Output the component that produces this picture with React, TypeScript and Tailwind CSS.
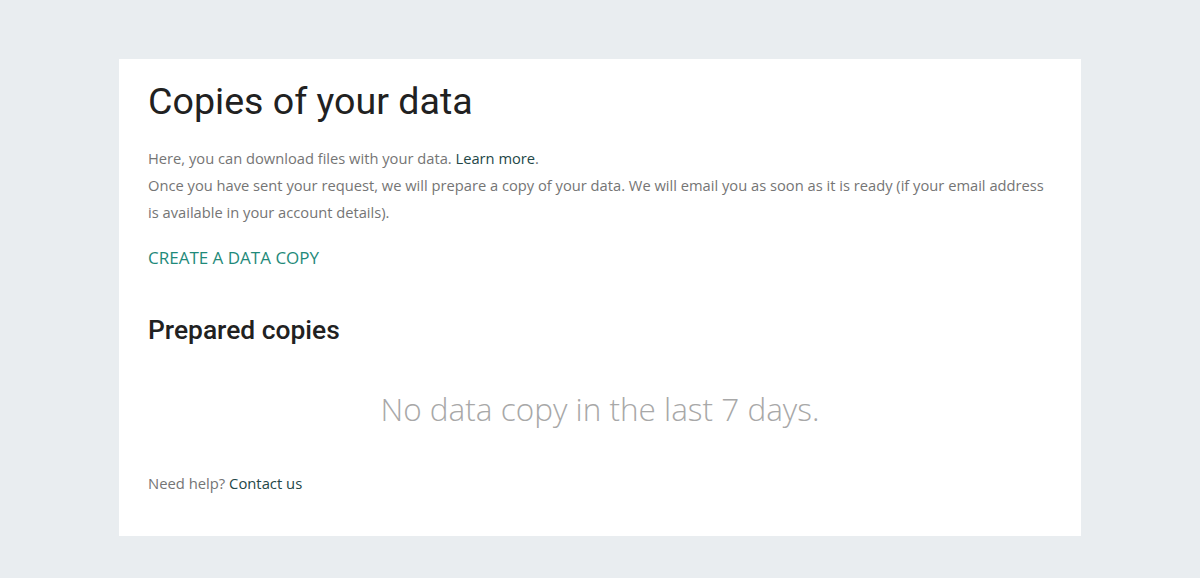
export default function App() {
  return (
    <div className="min-h-[578px] bg-[#e9edf0] pt-[59px] pb-[43px]" style={{ fontFamily: '"Open Sans", sans-serif' }}>
      <div className="mx-auto w-[962px] bg-white px-[29px] pt-[20px] pb-[43px]">
        <h1 className="text-[37.6px] leading-[44px] text-[#212121] font-normal" style={{ fontFamily: 'Roboto, sans-serif' }}>
          Copies of your data
        </h1>

        <div className="mt-[22px] text-[14.7px] leading-[27px] text-[#757575]">
          <p>
            Here, you can download files with your data.{' '}
            <a href="#" className="text-[#234747]">Learn more</a>.
          </p>
          <p>
            Once you have sent your request, we will prepare a copy of your data. We will email you as soon as it is ready (if your email address is available in your account details).
          </p>
        </div>

        <button className="mt-[21px] text-[17px] leading-[22px] text-[#1f8a7a] uppercase">
          Create a data copy
        </button>

        <h2 className="mt-[45px] text-[26.4px] leading-[30px] font-medium text-[#212121]" style={{ fontFamily: 'Roboto, sans-serif' }}>
          Prepared copies
        </h2>

        <p className="mt-[44px] text-center text-[31.5px] leading-[40px] font-light text-[#a8a8a8]">
          No data copy in the last 7 days.
        </p>

        <p className="mt-[44px] text-[14.8px] leading-[20px] text-[#757575]">
          Need help? <a href="#" className="text-[#234747]">Contact us</a>
        </p>
      </div>
    </div>
  )
}
